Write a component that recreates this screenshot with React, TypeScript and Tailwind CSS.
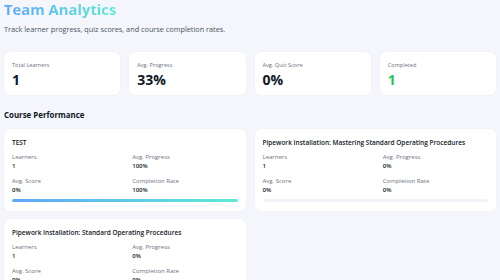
import React from "react";

interface Stat {
  label: string;
  value: string;
  accent?: boolean;
}

interface Course {
  title: string;
  learners: string;
  progress: string;
  score: string;
  completion: string;
  pct: number;
}

const stats: Stat[] = [
  { label: "Total Learners", value: "1" },
  { label: "Avg. Progress", value: "33%" },
  { label: "Avg. Quiz Score", value: "0%" },
  { label: "Completed", value: "1", accent: true },
];

const courses: Course[] = [
  { title: "TEST", learners: "1", progress: "100%", score: "0%", completion: "100%", pct: 100 },
  {
    title: "Pipework Installation: Mastering Standard Operating Procedures",
    learners: "1",
    progress: "0%",
    score: "0%",
    completion: "0%",
    pct: 0,
  },
  {
    title: "Pipework Installation: Standard Operating Procedures",
    learners: "1",
    progress: "0%",
    score: "0%",
    completion: "0%",
    pct: 0,
  },
];

function StatCard({ stat }: { stat: Stat }) {
  return (
    <div className="h-[43px] rounded-[6px] bg-white px-[8px] pt-[9px] shadow-[0_0_2px_rgba(15,23,42,0.06)]">
      <div className="text-[5.6px] leading-[8px] text-[#6b7280]">{stat.label}</div>
      <div
        className={`mt-[2px] text-[14px] font-bold leading-[18px] ${
          stat.accent ? "text-[#22c55e]" : "text-[#111827]"
        }`}
      >
        {stat.value}
      </div>
    </div>
  );
}

function Metric({ label, value }: { label: string; value: string }) {
  return (
    <div>
      <div className="text-[6px] leading-[10px] text-[#6b7280]">{label}</div>
      <div className="text-[6px] font-semibold leading-[8px] text-[#111827]">{value}</div>
    </div>
  );
}

function CourseCard({ course }: { course: Course }) {
  return (
    <div className="rounded-[6px] bg-white px-[8px] pt-[9px] pb-[9px] shadow-[0_0_2px_rgba(15,23,42,0.06)]">
      <div className="text-[6.5px] font-semibold leading-[10px] text-[#111827]">{course.title}</div>
      <div className="mt-[4px] grid grid-cols-2 gap-x-[15px] gap-y-[6px]">
        <Metric label="Learners" value={course.learners} />
        <Metric label="Avg. Progress" value={course.progress} />
        <Metric label="Avg. Score" value={course.score} />
        <Metric label="Completion Rate" value={course.completion} />
      </div>
      <div className="mt-[5px] h-[3px] w-full overflow-hidden rounded-full bg-[#f1f4f9]">
        <div
          className="h-full rounded-full bg-gradient-to-r from-[#60a5fa] to-[#5eead4]"
          style={{ width: `${course.pct}%` }}
        />
      </div>
    </div>
  );
}

export default function App() {
  return (
    <div className="h-[280px] w-[500px] overflow-hidden bg-[#f4f6fb] px-[4px] font-['Open_Sans',sans-serif]">
      <h1 className="w-fit bg-gradient-to-r from-[#60a5fa] to-[#5eead4] bg-clip-text text-[14.8px] font-bold leading-[19px] text-transparent">
        Team Analytics
      </h1>
      <p className="mt-[4px] text-[7.3px] leading-[12px] text-[#4b5563]">
        Track learner progress, quiz scores, and course completion rates.
      </p>
      <div className="mt-[17px] grid grid-cols-4 gap-[9px]">
        {stats.map((s) => (
          <StatCard key={s.label} stat={s} />
        ))}
      </div>
      <h2 className="mt-[14px] text-[7.9px] font-bold leading-[12px] text-[#111827]">Course Performance</h2>
      <div className="mt-[8px] grid grid-cols-2 gap-x-[9px] gap-y-[8px]">
        {courses.map((c) => (
          <CourseCard key={c.title} course={c} />
        ))}
      </div>
    </div>
  );
}
